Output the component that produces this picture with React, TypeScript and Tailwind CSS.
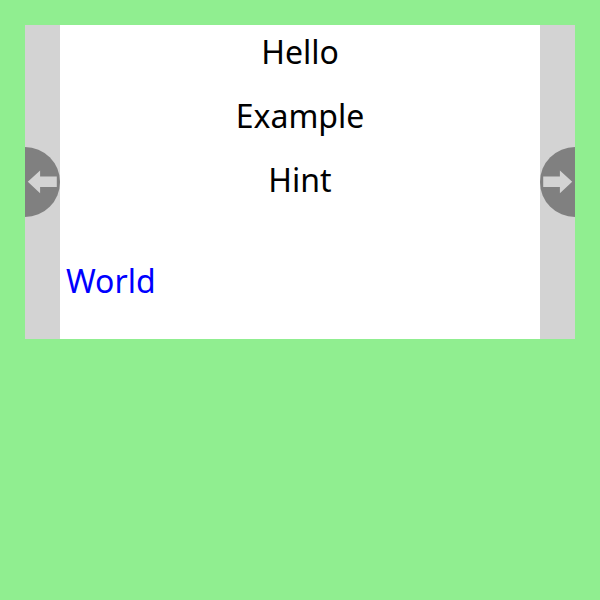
function Arrow({ flip = false }: { flip?: boolean }) {
  return (
    <svg width="35" height="70" viewBox="0 0 35 70" className="block shrink-0">
      <circle cx={flip ? 35 : 0} cy="35" r="35" fill="#808080" />
      <path
        d={flip ? "M3.2 29.4H19.9V23.6L32.2 34.8L19.9 46.2V40H3.2Z" : "M31.8 29.4H15.1V23.6L2.8 34.8L15.1 46.2V40H31.8Z"}
        fill="#d3d3d3"
      />
    </svg>
  );
}

export default function App() {
  return (
    <div className="h-[600px] w-[600px] bg-[#90ee90] p-[25px] font-['Noto_Sans',sans-serif] text-[32px] leading-[44px] text-black">
      <div className="flex h-[314px] bg-white">
        <button aria-label="Previous" className="flex w-[35px] items-center bg-[#d3d3d3]">
          <Arrow />
        </button>
        <main className="flex-1 px-1.5 pt-[5px]">
          <div className="flex flex-col gap-5 text-center">
            <p>Hello</p>
            <p>Example</p>
            <p>Hint</p>
          </div>
          <p className="mt-[57px] text-[#0000ff]">World</p>
        </main>
        <button aria-label="Next" className="flex w-[35px] items-center bg-[#d3d3d3]">
          <Arrow flip />
        </button>
      </div>
    </div>
  );
}
